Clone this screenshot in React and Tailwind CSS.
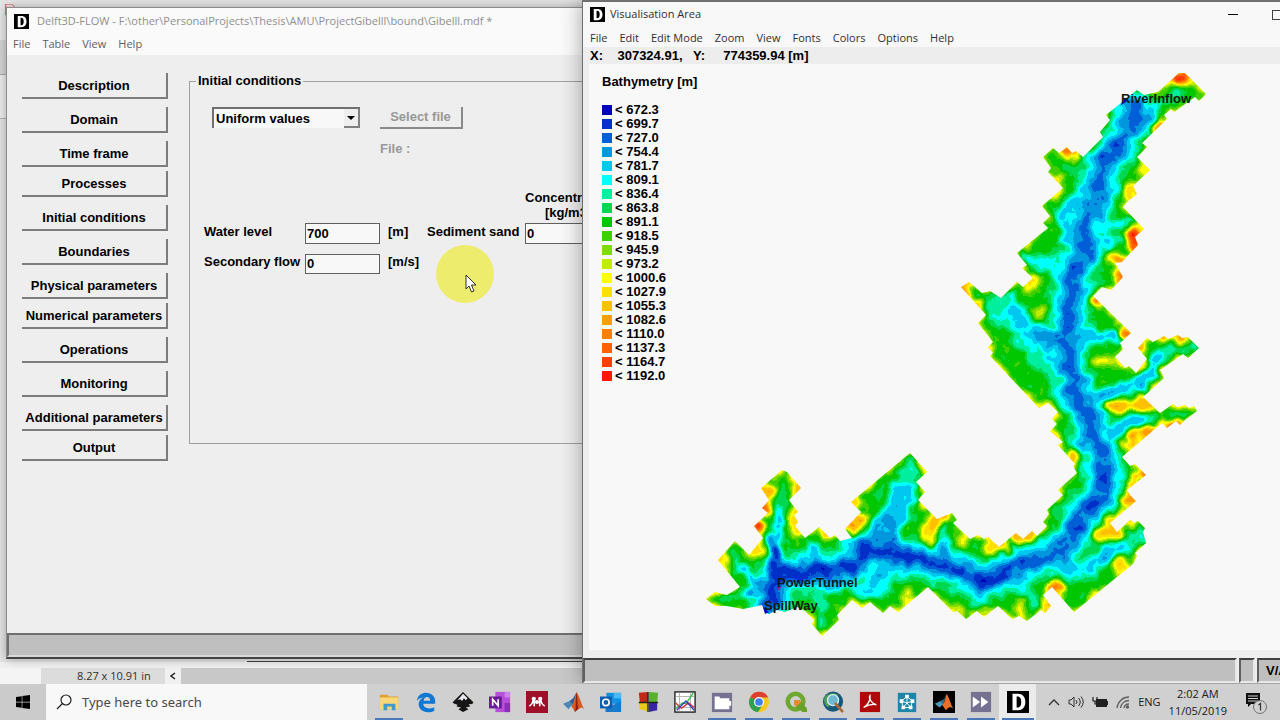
import React, { useState } from "react";
import { FaWindows } from "react-icons/fa";

const buttonGroups = [
  ["Description", "Domain", "Time frame"],
  ["Processes", "Initial conditions", "Boundaries", "Physical parameters"],
  ["Numerical parameters", "Operations", "Monitoring", "Additional parameters"],
  ["Output"],
];

const legend = [
  ["672.3", "#0000b8"],
  ["699.7", "#0030c8"],
  ["727.0", "#0060d8"],
  ["754.4", "#0098e0"],
  ["781.7", "#00c8f0"],
  ["809.1", "#00ffff"],
  ["836.4", "#00f0a0"],
  ["863.8", "#00d850"],
  ["891.1", "#00c800"],
  ["918.5", "#40d000"],
  ["945.9", "#80dc00"],
  ["973.2", "#c0ec00"],
  ["1000.6", "#ffff00"],
  ["1027.9", "#ffe000"],
  ["1055.3", "#ffc000"],
  ["1082.6", "#ff9c00"],
  ["1110.0", "#ff8000"],
  ["1137.3", "#ff6000"],
  ["1164.7", "#ff4000"],
  ["1192.0", "#ff1800"],
];

// one step of the discrete colour ramp per legend entry
const channel = (start) =>
  legend.map(([, c]) => (parseInt(c.slice(start, start + 2), 16) / 255).toFixed(3)).join(" ");

// grey value that lands in the middle of legend band k
const level = (k) => {
  const v = Math.round(((k + 0.5) / 20) * 255);
  return `rgb(${v},${v},${v})`;
};

const shore =
  "1179,73 1185,73 1206,94 1199,101 1195,97 1174,112 1171,109 1164,115 1167,119 1142,143 1147,147 1137,157 1150,170 1133,186 1137,194 1127,202 1123,207 1144,229 1135,237 1138,245 1122,262 1115,263 1123,277 1111,290 1102,287 1093,296 1131,333 1120,343 1123,349 1115,357 1125,368 1129,366 1136,373 1147,359 1138,348 1147,338 1153,342 1164,336 1168,339 1178,335 1182,338 1188,337 1199,348 1188,358 1183,354 1160,370 1164,378 1143,397 1160,413 1173,404 1177,407 1185,405 1189,408 1194,406 1197,411 1185,420 1180,425 1176,421 1167,428 1162,423 1122,457 1130,466 1135,464 1146,475 1127,490 1130,495 1136,501 1110,523 1117,532 1130,520 1134,523 1138,521 1145,528 1143,532 1146,543 1135,553 1137,556 1133,564 1074,612 1052,587 1043,595 1051,606 1045,613 1041,610 1027,621 1019,616 1012,619 998,606 984,617 977,611 966,619 957,611 953,612 928,587 898,612 890,606 883,613 870,602 862,608 852,600 837,615 839,620 822,636 812,624 814,620 805,611 797,607 785,612 777,610 769,614 765,612 762,605 753,607 743,609 727,606 715,606 706,599 715,592 727,595 740,587 718,560 735,541 749,555 763,538 754,526 768,513 762,508 769,500 761,488 782,470 787,472 801,488 789,500 798,512 794,515 798,522 795,526 805,538 819,527 830,538 835,535 840,541 852,538 845,529 861,512 851,502 910,453 927,472 916,482 925,492 918,500 937,519 952,513 957,520 953,523 970,539 978,535 984,539 988,537 999,547 1016,533 1023,539 1032,531 1037,536 1047,526 1043,522 1049,514 1047,510 1063,495 1058,490 1077,473 1073,466 1075,464 1058,445 1063,442 1050,431 1057,424 1052,419 1058,412 1048,403 1039,408 990,356 993,353 988,347 993,342 978,323 986,315 961,287 969,282 982,293 990,291 1001,298 1017,282 1023,287 1033,278 1022,268 1027,265 1017,253 1048,228 1043,223 1050,216 1042,206 1063,188 1048,172 1051,168 1043,157 1053,148 1059,153 1067,147 1072,153 1076,151 1083,157 1103,137 1100,132 1110,120 1106,115 1137,90 1144,95 1158,92";

const river =
  "M1130 104 L1138 118 L1123 135 L1120 147 L1103 163 L1098 183 L1095 207 L1085 223 L1083 257 L1073 273 L1073 287 L1068 320 L1068 347 L1073 390 L1090 417 L1092 440 L1102 450 L1102 460 L1105 490 L1080 520 L1072 537 L1053 557 L1023 563 L983 583 L963 572 L923 560 L890 552 L863 548 L853 565 L823 572 L780 573 L772 600 L766 611";

// tributaries: path, band, width
const valleys = [
  ["M1198 346 L1178 348 L1158 355 L1150 375 L1125 390 L1092 405", 6, 9],
  ["M1158 358 L1148 378 L1122 388 L1092 405", 4, 12],
  ["M1195 411 L1160 418 L1125 428 L1100 445", 7, 8],
  ["M1140 419 L1122 427 L1103 444", 4, 12],
  ["M1142 536 L1110 552 L1085 572 L1055 565", 6, 16],
  ["M1120 548 L1085 568 L1052 566", 4, 12],
  ["M1000 308 L1022 325 L1040 350 L1062 370", 6, 32],
  ["M1010 308 L1024 325 L1045 345 L1065 365", 4, 18],
  ["M1035 338 L1065 342 L1090 340", 3, 12],
  ["M1068 343 L1112 335", 4, 17],
  ["M1030 258 L1050 265 L1070 260", 5, 13],
  ["M1070 240 L1060 215 L1085 195", 4, 14],
  ["M1095 230 L1125 222", 5, 9],
  ["M1090 250 L1115 240", 5, 12],
  ["M1105 190 L1118 185", 5, 9],
  ["M1182 92 L1165 102 L1140 115", 6, 8],
  ["M1158 108 L1140 118", 4, 8],
  ["M1060 163 L1074 174", 7, 6],
  ["M910 470 L903 500 L890 530", 6, 22],
  ["M904 492 L895 515 L885 540", 4, 22],
  ["M885 530 L880 545", 3, 28],
  ["M900 570 L880 585 L862 590", 5, 18],
  ["M890 565 L872 582", 4, 14],
  ["M790 580 L845 584", 4, 16],
  ["M808 584 L812 590", 3, 12],
  ["M781 492 L781 520 L775 545", 6, 8],
  ["M781 515 L774 545 L773 575", 4, 10],
  ["M813 548 L812 565", 4, 14],
  ["M734 557 L745 572 L765 588", 6, 10],
  ["M742 570 L765 588", 3, 10],
  ["M714 600 L740 595 L765 592", 6, 6],
  ["M745 592 L765 592", 3, 7],
  ["M822 622 L820 600 L810 585", 6, 10],
  ["M943 532 L944 560", 5, 9],
  ["M944 550 L945 562", 3, 7],
  ["M978 557 L980 580", 5, 7],
  ["M1017 570 L1020 592", 4, 12],
  ["M1030 590 L1037 605", 6, 8],
  ["M960 585 L975 598", 5, 9],
  ["M1115 470 L1125 480", 5, 10],
];

// steep slopes and small hills: cx, cy, rx, ry, band
const peaks = [
  [1178, 77, 8, 5, 19],
  [1190, 82, 9, 3, 12],
  [1158, 127, 4, 7, 16],
  [1069, 152, 5, 4, 18],
  [1076, 158, 4, 4, 14],
  [1059, 179, 5, 4, 14],
  [1130, 191, 5, 7, 14],
  [1145, 171, 5, 4, 12],
  [1134, 240, 6, 10, 18],
  [1118, 260, 4, 3, 16],
  [1121, 276, 4, 5, 16],
  [1031, 285, 5, 6, 13],
  [1037, 314, 5, 9, 11],
  [965, 287, 5, 4, 16],
  [979, 305, 5, 5, 13],
  [1095, 300, 4, 5, 17],
  [1126, 334, 5, 5, 16],
  [1105, 361, 12, 3, 12],
  [1088, 390, 5, 8, 10],
  [1083, 358, 5, 8, 9],
  [1128, 406, 22, 5, 14],
  [1147, 402, 8, 6, 14],
  [1140, 347, 3, 4, 16],
  [1140, 369, 5, 4, 13],
  [1164, 338, 4, 2, 17],
  [1178, 337, 3, 2, 16],
  [1168, 425, 5, 3, 19],
  [1180, 423, 4, 2, 18],
  [1142, 433, 12, 3, 15],
  [1130, 443, 8, 4, 14],
  [1048, 406, 8, 4, 13],
  [1072, 459, 6, 6, 14],
  [1142, 475, 5, 6, 17],
  [1130, 500, 6, 7, 15],
  [1112, 521, 8, 3, 14],
  [1112, 533, 14, 4, 14],
  [1098, 537, 5, 4, 13],
  [1140, 545, 5, 3, 14],
  [1116, 564, 8, 6, 14],
  [1056, 588, 8, 6, 16],
  [1047, 603, 4, 6, 13],
  [1020, 606, 4, 9, 12],
  [1026, 538, 7, 6, 14],
  [1017, 536, 4, 4, 15],
  [1003, 546, 5, 4, 14],
  [991, 551, 4, 8, 13],
  [964, 538, 4, 8, 12],
  [936, 520, 7, 8, 14],
  [928, 534, 5, 14, 13],
  [858, 520, 7, 5, 15],
  [851, 527, 6, 4, 15],
  [854, 502, 3, 4, 14],
  [758, 526, 4, 5, 19],
  [765, 508, 4, 5, 17],
  [768, 492, 6, 4, 15],
  [797, 488, 6, 7, 15],
  [796, 522, 4, 12, 13],
  [757, 551, 8, 5, 13],
  [724, 561, 4, 8, 12],
  [824, 533, 5, 4, 14],
  [908, 597, 5, 8, 12],
  [960, 609, 5, 3, 12],
  [986, 607, 5, 4, 11],
  [820, 608, 4, 4, 9],
];

const Bathymetry = () => (
  <svg viewBox="700 64 580 586" className="block h-[586px] w-[580px] shrink-0">
    <defs>
      <clipPath id="shore">
        <polygon points={shore} />
      </clipPath>
      {/* soften the relief, roughen it with noise, then cut it into colour bands */}
      <filter
        id="bands"
        filterUnits="userSpaceOnUse"
        x="700"
        y="64"
        width="520"
        height="586"
        colorInterpolationFilters="sRGB"
      >
        <feTurbulence type="fractalNoise" baseFrequency="0.08" numOctaves="3" seed="8" result="noise" />
        <feDisplacementMap
          in="SourceGraphic"
          in2="noise"
          scale="20"
          xChannelSelector="R"
          yChannelSelector="G"
          result="bent"
        />
        <feGaussianBlur in="bent" stdDeviation="2.5" result="soft" />
        <feColorMatrix
          in="noise"
          type="matrix"
          values="0 0 1 0 0  0 0 1 0 0  0 0 1 0 0  0 0 0 0 1"
          result="grain"
        />
        <feComposite in="soft" in2="grain" operator="arithmetic" k1="0" k2="1" k3="0.14" k4="-0.07" />
        <feComponentTransfer>
          <feFuncR type="discrete" tableValues={channel(1)} />
          <feFuncG type="discrete" tableValues={channel(3)} />
          <feFuncB type="discrete" tableValues={channel(5)} />
          <feFuncA type="linear" slope="0" intercept="1" />
        </feComponentTransfer>
      </filter>
    </defs>
    <g clipPath="url(#shore)">
      <g filter="url(#bands)" fill="none" strokeLinejoin="round" strokeLinecap="round">
        <rect x="680" y="44" width="560" height="620" fill={level(13)} />
        <polygon points={shore} fill={level(8)} />
        <path d={river} stroke={level(7)} strokeWidth="48" />
        {peaks.map(([cx, cy, rx, ry, k]) => (
          <ellipse key={`${cx}-${cy}`} cx={cx} cy={cy} rx={rx} ry={ry} fill={level(k)} stroke={level(k)} strokeWidth="3" />
        ))}
        <path d={river} stroke={level(5)} strokeWidth="34" />
        {valleys.map(([d, k, w]) => (
          <path key={d} d={d} stroke={level(k)} strokeWidth={w} />
        ))}
        <path d={river} stroke={level(3)} strokeWidth="21" />
        <path d={river} stroke={level(2)} strokeWidth="9" />
        <path d="M1103 470 L1103 490 L1080 517 L1068 540" stroke={level(2)} strokeWidth="17" />
        <path
          d="M1023 563 L983 583 L963 572 L923 560 L863 548 L853 567 L823 572 L775 573 L772 600 M774 545 L776 573"
          stroke={level(1)}
          strokeWidth="10"
        />
      </g>
    </g>
    <path d="M1120 106 L1125 98 L1127 101 Z M763 607 L769 612 L765 614 Z" fill="#0000c8" />
    <path d="M776 587 L781 587 L779 591 Z" fill="#8020a0" />
    <g className="fill-[#101810] font-['Liberation_Sans',sans-serif] text-[13px] font-bold">
      <text x="1121" y="103">RiverInflow</text>
      <text x="777" y="587">PowerTunnel</text>
      <text x="764" y="610">SpillWay</text>
    </g>
  </svg>
);

const DLogo = ({ className }) => (
  <svg viewBox="0 0 24 24" className={className}>
    <rect width="24" height="24" fill="#000" />
    <path d="M6 3 h6 c5 0 8 3.500 8 9 s-3 9 -8 9 h-6z M10.500 6 v12 h1 c3 0 4 -2.500 4 -6 s-1 -6 -4 -6z" fill="#fff" fillRule="evenodd" />
  </svg>
);

const MenuBar = ({ items, className }) => (
  <nav className={`flex items-center gap-3 ${className}`}>
    {items.map((item) => (
      <button key={item} type="button">
        {item}
      </button>
    ))}
  </nav>
);

const FlowWindow = () => {
  const [source, setSource] = useState("Uniform values");
  return (
    <section className="absolute top-[7px] bottom-[25px] left-[6px] flex w-[640px] flex-col border border-b-2 border-[#8c8c8c] border-b-[#444] bg-[#eeeeee] shadow-[0_0_10px_rgba(0,0,0,0.3)]">
      <header className="bg-[#fafafa] font-['Open_Sans',sans-serif] text-[11px]">
        <div className="flex h-[26px] items-center gap-2 pl-[7px] text-[#8f8f8f]">
          <DLogo className="size-[15px]" />
          <h1 className="whitespace-nowrap">
            Delft3D-FLOW - F:\other\PersonalProjects\Thesis\AMU\ProjectGibelll\bound\Gibelll.mdf *
          </h1>
        </div>
        <MenuBar items={["File", "Table", "View", "Help"]} className="h-[21px] pb-[1px] pl-[6px] text-[#606060]" />
      </header>
      <div className="flex flex-1 items-start gap-[21px] pt-[18px] pl-[15px] text-[13px] font-bold">
        <div className="flex w-[146px] flex-col gap-1">
          {buttonGroups.map((group) => (
            <div key={group[0]} className="flex flex-col gap-2">
              {group.map((name) => (
                <button
                  key={name}
                  type="button"
                  className="h-[26px] border-r-2 border-b-2 border-[#7c7c7c] pt-[2px] leading-[22px] whitespace-nowrap"
                >
                  {name}
                </button>
              ))}
            </div>
          ))}
        </div>
        <fieldset className="h-[371px] w-[450px] border border-[#a0a0a0] pl-[14px]">
          <legend className="-ml-2 h-4 px-[2px] leading-4">Initial conditions</legend>
          <div className="flex items-start gap-5 pt-[18px] pl-2">
            <span className="relative flex h-[21px] w-[148px] border-t-2 border-l-2 border-[#707070] bg-[#f8f8f8]">
              <select
                aria-label="Initial conditions type"
                value={source}
                onChange={(e) => setSource(e.target.value)}
                className="w-full appearance-none pl-[2px] leading-4 outline-none"
              >
                <option>Uniform values</option>
                <option>Initial conditions file</option>
              </select>
              <span className="pointer-events-none absolute top-0 right-0 flex h-full w-4 items-center justify-center border-r-2 border-b-2 border-[#808080] bg-[#eeeeee]">
                <svg viewBox="0 0 8 4" className="h-1 w-2">
                  <path d="M0 0 h8 l-4 4z" />
                </svg>
              </span>
            </span>
            <div className="text-[#989898]">
              <button type="button" disabled className="h-[22px] w-[83px] border-r-2 border-b-2 border-[#8a8a8a]">
                Select file
              </button>
              <p className="pt-[10px] leading-5">File :</p>
            </div>
          </div>
          <div className="grid grid-cols-[101px_75px_47px_98px_86px] items-center pt-[31px]">
            <p className="col-start-5 pb-[3px] leading-[15px]">
              Concentration
              <br />
              <span className="pl-5">[kg/m3]</span>
            </p>
            <label htmlFor="level" className="col-start-1 pb-1 leading-[17px]">Water level</label>
            <input id="level" defaultValue="700" className="h-[21px] border border-[#606060] bg-[#f8f8f8] pl-[1px]" />
            <span className="pb-1 pl-2 leading-[17px]">[m]</span>
            <label htmlFor="sand" className="pb-1 leading-[17px]">Sediment sand</label>
            <input id="sand" defaultValue="0" className="h-[21px] min-w-0 border border-[#606060] bg-[#f8f8f8] pl-[1px]" />
            <label htmlFor="flow" className="mt-[9px] pb-1 leading-[17px] whitespace-nowrap">Secondary flow</label>
            <input id="flow" defaultValue="0" className="mt-[9px] h-[20px] border border-[#606060] bg-[#f8f8f8] pl-[1px]" />
            <span className="mt-[9px] pb-1 pl-2 leading-[17px]">[m/s]</span>
          </div>
        </fieldset>
      </div>
      <div className="h-6 border-2 border-[#6f6f6f] border-b-[#d8d8d8] bg-[#bfbfbf]" />
    </section>
  );
};

const VisualisationWindow = () => (
  <section className="absolute top-0 -right-16 bottom-[1px] left-[582px] flex flex-col border border-t-2 border-[#707070] bg-[#f8f8f8] shadow-[0_0_20px_rgba(0,0,0,0.35)]">
    <header className="font-['Open_Sans',sans-serif] text-[11px] text-[#303030]">
      <div className="flex h-[25px] items-center pl-[7px]">
        <DLogo className="size-[15px]" />
        <h2 className="flex-1 pl-[5px]">Visualisation Area</h2>
        <button type="button" aria-label="Minimise" className="flex w-11 justify-center">
          <span className="h-px w-[10px] bg-black" />
        </button>
        <button type="button" aria-label="Maximise" className="flex w-11 justify-center">
          <span className="size-[10px] border border-[#404040]" />
        </button>
        <button type="button" aria-label="Close" className="w-11">×</button>
      </div>
      <MenuBar
        items={["File", "Edit", "Edit Mode", "Zoom", "View", "Fonts", "Colors", "Options", "Help"]}
        className="h-5 pt-[2px] pl-[7px]"
      />
    </header>
    <p className="h-[17px] bg-[#ededed] pl-[7px] text-[13px] leading-[17px] font-bold whitespace-pre">
      X:    307324.91,   Y:     774359.94 [m]
    </p>
    <div className="flex flex-1 border-l-[6px] border-[#eeeeee] text-[13px] font-bold">
      <div className="w-[111px] shrink-0 pt-[9px] pl-[13px]">
        <h3 className="leading-[18px]">Bathymetry [m]</h3>
        <ul className="pt-3">
          {legend.map(([value, color]) => (
            <li key={value} className="flex h-[14px] items-center gap-[3px] leading-[14px]">
              <span className="size-[10px]" style={{ backgroundColor: color }} />
              <span className="whitespace-nowrap">&lt; {value}</span>
            </li>
          ))}
        </ul>
      </div>
      <Bathymetry />
    </div>
    <footer className="flex h-[33px] gap-[2px] bg-[#eeeeee] pt-2 text-[13px] font-bold">
      <div className="flex-1 border-2 border-t-[#404040] border-r-[#e8e8e8] border-b-[#e8e8e8] border-l-[#606060] bg-[#bfbfbf]" />
      <div className="w-4 border-2 border-t-[#404040] border-r-[#e8e8e8] border-b-[#e8e8e8] border-l-[#606060] bg-[#bfbfbf]" />
      <div className="w-[86px] border-2 border-t-[#404040] border-r-[#e8e8e8] border-b-[#e8e8e8] border-l-[#606060] bg-[#bfbfbf] pl-[7px] leading-[21px]">
        V/A
      </div>
    </footer>
  </section>
);

const apps = [
  {
    name: "File Explorer",
    open: true,
    icon: (
      <>
        <path d="M2 4 h8 l2 2 h10 v14 h-20z" fill="#e0a030" />
        <path d="M2 7 h20 v13 h-20z" fill="#f8d778" />
        <path d="M6 21 v-7 h13 v7 h-4 v-4 h-5 v4z" fill="#3f9ad0" />
      </>
    ),
  },
  {
    name: "Edge",
    icon: (
      <path
        d="M2 11 C3 4 8 2 12 2 c6 0 10 4 10 9 v3 H9 c0 4 4 5 7 5 2 0 4 -.6 5 -1.200 v4 c-2 1 -4 1.500 -7 1.500 C8 23 4 19 4 14.500 4 10 7 8 9 7 5 7.500 3 9 2 11z M9.500 10.500 h7 c0 -3 -1.500 -4 -3.500 -4 -2 0 -3.500 2 -3.500 4z"
        fill="#0f78d4"
        fillRule="evenodd"
      />
    ),
  },
  {
    name: "Inkscape",
    icon: (
      <>
        <path d="M12 1 L23 12 c1 2 -2 2.500 -5 2.500 l2 2.500 -5 1 3 2 -6 3 -5 -3 3 -2 -5 -1 1 -2 C2 14 0 13 1 12z" fill="#151515" />
        <path d="M12 3 L17 8 l-2 2 -2 -2 -2 3 -2 -2 -3 1z" fill="#e8ecf2" />
      </>
    ),
  },
  {
    name: "OneNote",
    icon: (
      <>
        <rect x="7" y="1" width="16" height="22" fill="#b650d8" />
        <path d="M17 1 h6 v6 h-6z" fill="#d080ee" />
        <path d="M17 13 h6 v10 h-6z" fill="#8a30b0" />
        <rect y="6" width="14" height="13" fill="#6a1b96" />
        <path d="M4 16 V9 l6 7 V9" fill="none" stroke="#fff" strokeWidth="1.800" />
      </>
    ),
  },
  {
    name: "Mendeley",
    icon: (
      <>
        <rect width="24" height="24" fill="#a00f28" />
        <circle cx="8.500" cy="8.500" r="2.300" fill="#fff" />
        <circle cx="15.500" cy="8.500" r="2.300" fill="#fff" />
        <circle cx="12" cy="12" r="2.300" fill="#fff" />
        <path d="M8 9 c-1 3 0 5 -4 7 M16 9 c1 3 0 5 4 7 M9 10 v6 M15 10 v6" fill="none" stroke="#fff" strokeWidth="1.800" strokeLinecap="round" />
      </>
    ),
  },
  {
    name: "MATLAB",
    icon: (
      <>
        <path d="M0 14 l7 -3 4 3 -5 6z" fill="#4a88b8" />
        <path d="M7 11 l4 -3 4 -7 -4 14z" fill="#2e5f96" />
        <path d="M15 1 C18 6 20 14 23 20 c-4 -4 -6 0 -10 3 l-4 -7 c3 -1 4 -9 6 -15z" fill="#d85a20" />
        <path d="M15 1 c1 6 0 14 2 18 l-4 4 c2 -7 0 -14 2 -22z" fill="#8c2010" />
      </>
    ),
  },
  {
    name: "Outlook",
    icon: (
      <>
        <rect x="7" y="2" width="16" height="12" fill="#1490df" />
        <path d="M15 2 h8 v6 h-8z" fill="#50b8f0" />
        <path d="M6 11 l9 4 8 -4 v12 h-17z" fill="#1a78c8" />
        <rect y="6" width="13" height="13" fill="#0f5fb0" />
        <circle cx="6.500" cy="12.500" r="3.500" fill="none" stroke="#fff" strokeWidth="1.800" />
      </>
    ),
  },
  {
    name: "Blocks",
    icon: (
      <>
        <path d="M2 2 l10 -1 v11 h-9z" fill="#c02818" />
        <path d="M13 1 l10 1 -1 10 h-9z" fill="#58b030" />
        <path d="M2 13 h10 v9 l-9 -2z" fill="#e8c818" />
        <path d="M13 13 h9 v8 l-9 2z" fill="#3828a0" />
        <path d="M12 1 v22 M2 12.500 h21" stroke="#202020" strokeWidth="1.500" />
      </>
    ),
  },
  {
    name: "Plot",
    icon: (
      <>
        <rect x="1" y="1" width="22" height="22" fill="#fff" stroke="#202020" strokeWidth="1.500" />
        <path d="M6 2 v20 M18 2 v20 M2 6 h20 M2 18 h20" stroke="#b0b0b0" />
        <path d="M2 19 l7 -6 4 1 8 -12" fill="none" stroke="#30c040" strokeWidth="1.500" />
        <path d="M2 13 l6 6 8 -6 6 5" fill="none" stroke="#e03040" strokeWidth="1.500" />
        <path d="M3 21 l10 -10 9 10" fill="none" stroke="#3040c0" strokeWidth="1.500" />
      </>
    ),
  },
  {
    name: "Screen recorder",
    open: true,
    icon: (
      <>
        <rect x="1" y="2" width="22" height="21" fill="#747290" />
        <path d="M4 6 h5 l1 2 h10 v3 h2 v5 h-2 v4 h-16z" fill="#fff" />
      </>
    ),
  },
  {
    name: "Chrome",
    open: true,
    icon: (
      <>
        <circle cx="12" cy="12" r="11" fill="#f8c820" />
        <path d="M12 12 L2.500 6.500 A11 11 0 0 1 22 7 H12z" fill="#dd4030" />
        <path d="M12 12 L2.500 6.500 A11 11 0 0 0 11 23 L16 15z" fill="#30a050" />
        <circle cx="12" cy="12" r="5.500" fill="#fff" />
        <circle cx="12" cy="12" r="4.200" fill="#4080f0" />
      </>
    ),
  },
  {
    name: "QGIS",
    open: true,
    icon: (
      <>
        <circle cx="11.500" cy="11.500" r="8.500" fill="none" stroke="#6fa830" strokeWidth="5" />
        <path d="M10 10 h6 l8 9 v4 h-5 l-9 -8z" fill="#68a028" />
        <path d="M10 10 h6 l2 2 -6 5 -2 -2z" fill="#f08830" />
      </>
    ),
  },
  {
    name: "ArcMap",
    open: true,
    icon: (
      <>
        <circle cx="12" cy="11.500" r="11" fill="#18577c" />
        <path d="M3 6 c5 -5 11 -4 15 -2 l-6 4 -5 10 c-4 -2 -6 -7 -4 -12z" fill="#4f9c58" />
        <circle cx="12" cy="10" r="6" fill="#70b8d0" stroke="#d8ecf0" strokeWidth="1.500" />
        <path d="M15 14 l7 8" stroke="#a86a38" strokeWidth="3" strokeLinecap="round" />
      </>
    ),
  },
  {
    name: "Acrobat",
    open: true,
    icon: (
      <>
        <rect x="1" y="1" width="22" height="22" fill="#b00808" />
        <path d="M5 18 c4 -2 8 -8 7 -13 -2 3 2 9 7 10 -4 -1 -9 0 -14 3z" fill="none" stroke="#fff" strokeWidth="1.500" />
      </>
    ),
  },
  {
    name: "Network",
    open: true,
    icon: (
      <>
        <rect x="2" y="2" width="20" height="21" fill="#1b86aa" />
        <path d="M12 6 l6 5 -2 7 h-8 l-2 -7z M12 6 v7 M6 11 l6 2 6 -2 M8 18 l4 -5 4 5" fill="none" stroke="#fff" />
        <path d="M10 4 h4 v4 h-4z M4 9 h4 v4 h-4z M16 9 h4 v4 h-4z M6 16 h4 v4 h-4z M14 16 h4 v4 h-4z" fill="#fff" />
      </>
    ),
  },
  {
    name: "MATLAB figure",
    open: true,
    icon: (
      <>
        <rect width="24" height="24" fill="#000" />
        <path d="M2 14 l6 -3 4 3 -5 4z" fill="#4a98b8" />
        <path d="M8 11 l4 -2 3 -6 -4 12z" fill="#2e6f96" />
        <path d="M15 3 c3 5 4 11 7 16 -4 -3 -6 0 -8 2 l-4 -6 c3 -1 3 -7 5 -12z" fill="#e87028" />
      </>
    ),
  },
  {
    name: "Fast forward",
    open: true,
    icon: (
      <>
        <rect x="1" y="1" width="22" height="22" fill="#747290" />
        <path d="M3 6 l8 6 -8 6z M12 6 l8 6 -8 6z" fill="#fff" />
      </>
    ),
  },
];

const Taskbar = () => (
  <footer className="flex h-9 items-stretch bg-[#d0d0d0] font-['Open_Sans',sans-serif] text-[#202020]">
    <button type="button" aria-label="Start" className="flex w-[46px] shrink-0 items-center justify-center bg-[#cbcbcb]">
      <FaWindows className="size-4 text-black" />
    </button>
    <label className="flex w-[321px] items-center gap-[10px] bg-[#f8f8f8] pl-[10px]">
      <svg viewBox="0 0 16 16" className="size-4 shrink-0" fill="none" stroke="#202020" strokeWidth="1.200">
        <circle cx="10" cy="6" r="5" />
        <path d="M6.500 9.500 L1 15" />
      </svg>
      <input
        aria-label="Search"
        placeholder="Type here to search"
        className="w-full pt-[2px] font-['Noto_Sans',sans-serif] text-[13px] outline-none placeholder:text-[#484848]"
      />
    </label>
    <div className="flex pl-[3px]">
      {apps.map(({ name, open, icon }) => (
        <button key={name} type="button" aria-label={name} className="flex w-[37px] flex-col items-center pt-[7px]">
          <svg viewBox="0 0 24 24" className="size-[22px]">
            {icon}
          </svg>
          {open && <span className="mt-auto h-[2px] w-7 bg-[#4a78b8]" />}
        </button>
      ))}
      <button type="button" aria-label="Delft3D" className="flex w-[37px] flex-col items-center bg-[#ebebeb] pt-[7px]">
        <DLogo className="size-[22px]" />
        <span className="mt-auto h-[2px] w-8 bg-[#4a78b8]" />
      </button>
    </div>
    <div className="ml-auto flex items-center gap-2 pr-[13px] text-[11px]">
      <svg viewBox="0 0 12 8" className="h-2 w-3" fill="none" stroke="#303030" strokeWidth="1.300">
        <path d="M1 7 l5 -5 5 5" />
      </svg>
      <svg viewBox="0 0 16 14" className="h-[14px] w-4" fill="none" stroke="#303030">
        <path d="M1 5 h2 l3 -3 v10 l-3 -3 h-2z M8 5 q2 2 0 4 M10.500 3 q3.500 4 0 8 M13 1.500 q4.500 5.500 0 11" />
      </svg>
      <svg viewBox="0 0 16 12" className="h-3 w-4">
        <rect x="4.500" y="3.500" width="10" height="7" fill="#202020" stroke="#202020" />
        <path d="M15 5.500 h1 v3 h-1z M1 1 v4 h4 v-4 M3 5 v3 h2" fill="none" stroke="#202020" strokeWidth="1.200" />
      </svg>
      <svg viewBox="0 0 14 14" className="size-[14px]" fill="none" stroke="#606060" strokeWidth="1.300">
        <path d="M1 13 A12 12 0 0 1 13 2 M4.500 13 A8.500 8.500 0 0 1 13 5.500 M8 13 A5 5 0 0 1 13 9" />
        <circle cx="11.500" cy="12" r="1" fill="#303030" />
      </svg>
      <span>ENG</span>
      <p className="text-center leading-[17px]">
        2:02 AM
        <br />
        11/05/2019
      </p>
      <svg viewBox="0 0 24 24" className="ml-2 size-6 shrink-0">
        <path d="M3 3 h14 v11 h-9 l-3 3 v-3 h-2z" fill="#101010" />
        <path d="M5 6 h10 M5 8.500 h10 M5 11 h10" stroke="#d0d0d0" />
        <circle cx="17" cy="17" r="6.500" fill="#d0d0d0" stroke="#707070" />
        <path d="M15.500 15 l2 -1.500 v7" fill="none" stroke="#303030" strokeWidth="1.200" />
      </svg>
    </div>
  </footer>
);

const App = () => {
  return (
    <div className="flex min-h-screen flex-col overflow-hidden bg-[#e4e4e4] font-['Liberation_Sans',sans-serif] text-black">
      <main className="relative flex flex-1 flex-col overflow-hidden">
        {/* document window that stays behind the others */}
        <div className="h-10 bg-[#e6e6e6]">
          <svg viewBox="0 0 12 14" className="ml-1 h-4 w-3 pt-1" fill="#f0e0e0" stroke="#c84048">
            <path d="M1 0 h7 l3 3 v10 h-10z" />
          </svg>
        </div>
        <div className="h-[35px] border-b border-[#a8a8a8] bg-[#d4d4d4]" />
        <div className="h-11 border-b border-[#b0b0b0] bg-[#ececec]" />
        <div className="flex-1" />
        <div className="flex h-[23px] flex-col">
          <div className="ml-[247px] h-px bg-[#404040]" />
          <div className="h-[6px] bg-[#f0f0f0]" />
          <div className="flex flex-1 items-center font-['Open_Sans',sans-serif] text-[11px] text-[#303030]">
            <span className="h-full w-[41px] bg-[#f4f4f4]" />
            <span className="h-full w-[124px] bg-[#dcdcdc] pl-9 leading-4 whitespace-nowrap">8.27 x 10.91 in</span>
            <button type="button" aria-label="Scroll left" className="flex h-full w-4 items-center justify-center bg-[#f0f0f0]">
              <svg viewBox="0 0 6 8" className="h-2 w-[6px]" fill="none" stroke="#202020" strokeWidth="1.500">
                <path d="M5 1 l-4 3 4 3" />
              </svg>
            </button>
            <span className="h-full flex-1 bg-[#c8c8c8]" />
          </div>
        </div>
        <FlowWindow />
        <VisualisationWindow />
        <div className="pointer-events-none absolute top-[245px] left-[436px] size-[58px] rounded-full bg-[#eeec6c]">
          <svg viewBox="0 0 12 19" className="mt-[29px] ml-[29px] h-[19px] w-3">
            <path d="M1 1 v14 l3 -3 2.500 6 2.500 -1 -2.500 -6 h4.500z" fill="#fff" stroke="#303030" />
          </svg>
        </div>
      </main>
      <Taskbar />
    </div>
  );
};

export default App;
